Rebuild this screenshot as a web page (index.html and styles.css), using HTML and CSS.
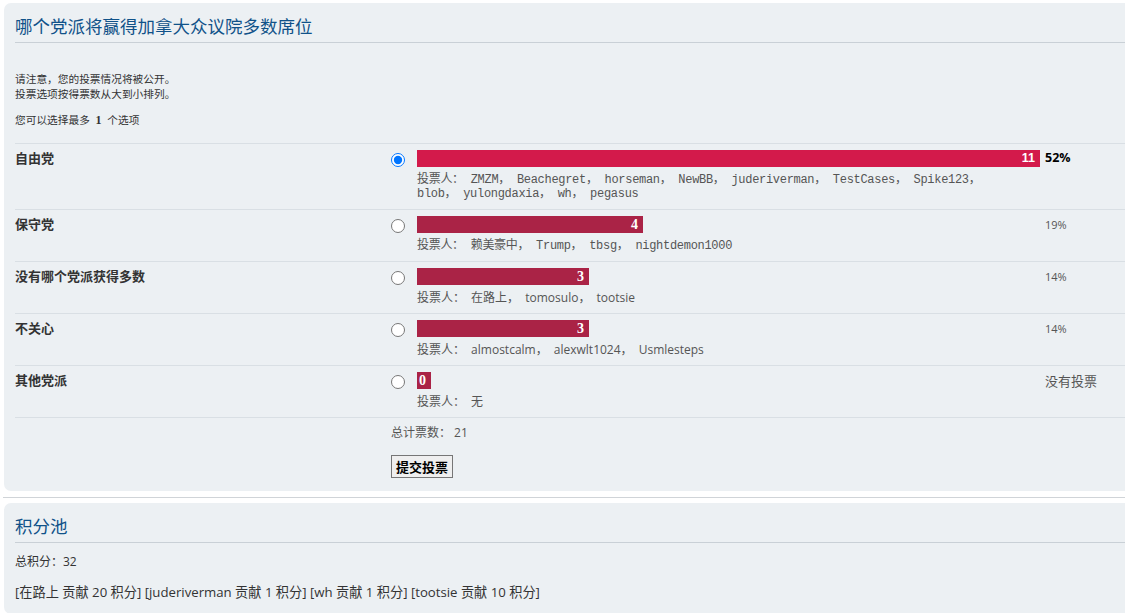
FILE: index.html
```html
<!DOCTYPE html>
<html lang="zh-CN">
<head>
  <meta charset="UTF-8" />
  <title>投票</title>
  <link rel="stylesheet" href="styles.css">
</head>
<body>
  <div class="wrap">
    <div class="panel">
      <h2>哪个党派将赢得加拿大众议院多数席位</h2>
      <p class="notes">请注意，您的投票情况将被公开。<br>投票选项按得票数从大到小排列。</p>
      <p class="max">您可以选择最多 <b>1</b> 个选项</p>

      <div class="poll">
        <div class="row">
          <div class="opt">自由党</div>
          <div class="pick"><input type="radio" name="vote" checked></div>
          <div class="result">
            <div class="bar hot sans" style="width:623px">11</div>
            <div class="voters mono">投票人： ZMZM， Beachegret， horseman， NewBB， juderiverman， TestCases， Spike123，<br>blob， yulongdaxia， wh， pegasus</div>
          </div>
          <div class="pct lead">52%</div>
        </div>
        <div class="row">
          <div class="opt">保守党</div>
          <div class="pick"><input type="radio" name="vote"></div>
          <div class="result">
            <div class="bar" style="width:226px">4</div>
            <div class="voters mono">投票人： 赖美豪中， Trump， tbsg， nightdemon1000</div>
          </div>
          <div class="pct">19%</div>
        </div>
        <div class="row">
          <div class="opt">没有哪个党派获得多数</div>
          <div class="pick"><input type="radio" name="vote"></div>
          <div class="result">
            <div class="bar" style="width:172px">3</div>
            <div class="voters">投票人： 在路上， tomosulo， tootsie</div>
          </div>
          <div class="pct">14%</div>
        </div>
        <div class="row">
          <div class="opt">不关心</div>
          <div class="pick"><input type="radio" name="vote"></div>
          <div class="result">
            <div class="bar" style="width:172px">3</div>
            <div class="voters">投票人： almostcalm， alexwlt1024， Usmlesteps</div>
          </div>
          <div class="pct">14%</div>
        </div>
        <div class="row">
          <div class="opt">其他党派</div>
          <div class="pick"><input type="radio" name="vote"></div>
          <div class="result">
            <div class="bar" style="width:14px">0</div>
            <div class="voters">投票人： 无</div>
          </div>
          <div class="pct none">没有投票</div>
        </div>
        <div class="total">
          <p>总计票数： 21</p>
          <button type="button">提交投票</button>
        </div>
      </div>
    </div>

    <hr>

    <div class="panel">
      <h2>积分池</h2>
      <p class="sum">总积分：32</p>
      <p class="gifts">[在路上 贡献 20 积分] [juderiverman 贡献 1 积分] [wh 贡献 1 积分] [tootsie 贡献 10 积分]</p>
    </div>
  </div>
</body>
</html>
```

FILE: styles.css
```css
body { margin: 0; background: #fff; font-family: "Open Sans", "Noto Sans CJK SC", sans-serif; color: #333; overflow: hidden; }
.wrap { padding: 3px 0 0 4px; overflow: hidden; }
.panel { background: #ecf0f3; border-radius: 7px; margin-right: -20px; padding: 12px 0 13px 11px; }
.panel h2 { margin: 0; font-weight: normal; font-size: 17.5px; line-height: 22px; color: #105289; padding-bottom: 5px; border-bottom: 1px solid #c9d0d6; font-family: "Noto Sans CJK SC", sans-serif; }
.notes { margin: 29px 0 0; font-size: 10.7px; line-height: 15px; }
.max { margin: 11px 0 0; font-size: 10.7px; line-height: 15px; }
.max b { font-family: "Liberation Serif", serif; font-size: 12px; margin: 0 3px; }
.poll { margin-top: 15px; }
.row { display: flex; border-top: 1px solid #d9dfe4; padding: 6px 0 8px; }
.opt { width: 376px; flex-shrink: 0; font-weight: bold; font-size: 13px; line-height: 15px; color: #333; font-family: "Noto Sans CJK SC", sans-serif; }
.pick { width: 26px; flex-shrink: 0; }
.pick input { margin: 2px 0 0 0; width: 14px; height: 14px; }
.result { width: 628px; flex-shrink: 0; }
.bar { height: 17px; line-height: 17px; background: #aa2346; color: #fff; font-weight: bold; text-align: right; padding-right: 5px; box-sizing: border-box; font-family: "Liberation Serif", serif; font-size: 14px; min-width: 14px; }
.bar.hot { background: #d31a4b; }
.bar.sans { font-family: "Liberation Sans", sans-serif; font-size: 12.5px; }
.voters { margin-top: 6px; font-size: 12px; line-height: 14px; color: #555; white-space: nowrap; word-spacing: 3px; }
.voters.mono { font-family: "Liberation Mono", "Noto Sans CJK SC", monospace; letter-spacing: -0.3px; word-spacing: 0; }
.pct { font-size: 11px; line-height: 17px; color: #555; }
.pct.lead { font-weight: bold; font-size: 12.5px; color: #000; line-height: 15px; }
.pct.none { font-size: 13px; font-family: "Noto Sans CJK SC", sans-serif; }
.total { border-top: 1px solid #d9dfe4; padding: 6px 0 0 376px; }
.total p { margin: 0; font-size: 12px; line-height: 17px; color: #555; }
.total button { margin-top: 14px; font-family: "Noto Sans CJK SC", sans-serif; font-weight: bold; font-size: 13px; line-height: 19px; padding: 1px 4px; border: 1px solid #767676; background: #efefef; color: #000; border-radius: 0; }
hr { border: none; border-top: 1px solid #d0d4d8; margin: 6px 0 5px -1px; }
.sum { margin: 10px 0 0; font-size: 12px; line-height: 17px; }
.gifts { margin: 14px 0 0; font-size: 13.2px; line-height: 17px; }
```
